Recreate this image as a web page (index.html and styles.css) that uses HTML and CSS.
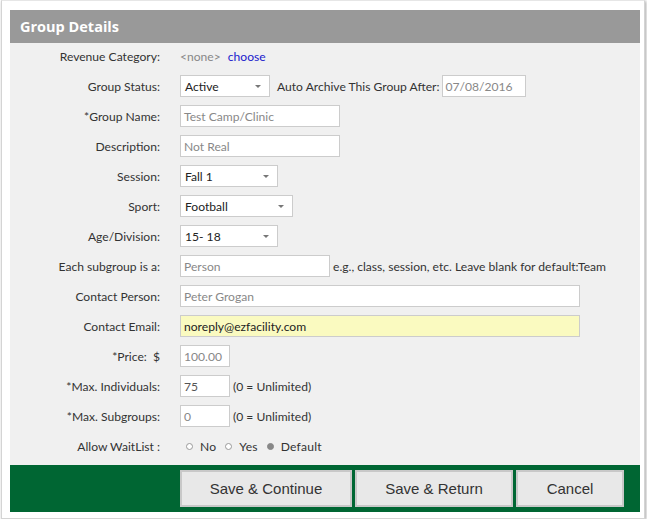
FILE: index.html
```html
<!DOCTYPE html>
<html>
<head>
<meta charset="utf-8">
<link rel="stylesheet" href="styles.css">
</head>
<body>
<div class="frame">
  <div class="panel">
    <div class="header">Group Details</div>
    <div class="form">
      <div class="row">
        <div class="label">Revenue Category:</div>
        <div class="field"><span class="none">&lt;none&gt;</span><a class="choose">choose</a></div>
      </div>
      <div class="row">
        <div class="label">Group Status:</div>
        <div class="field">
          <div class="select w90">Active<span class="caret"></span></div>
          <span class="after">Auto Archive This Group After:</span>
          <div class="input date">07/08/2016</div>
        </div>
      </div>
      <div class="row">
        <div class="label">*Group Name:</div>
        <div class="field"><div class="input w160">Test Camp/Clinic</div></div>
      </div>
      <div class="row">
        <div class="label">Description:</div>
        <div class="field"><div class="input w160">Not Real</div></div>
      </div>
      <div class="row">
        <div class="label">Session:</div>
        <div class="field"><div class="select w98">Fall 1<span class="caret"></span></div></div>
      </div>
      <div class="row">
        <div class="label">Sport:</div>
        <div class="field"><div class="select w113">Football<span class="caret"></span></div></div>
      </div>
      <div class="row">
        <div class="label">Age/Division:</div>
        <div class="field"><div class="select w98">15- 18<span class="caret"></span></div></div>
      </div>
      <div class="row">
        <div class="label">Each subgroup is a:</div>
        <div class="field"><div class="input w150">Person</div><span class="hint">e.g., class, session, etc. Leave blank for default:Team</span></div>
      </div>
      <div class="row">
        <div class="label">Contact Person:</div>
        <div class="field"><div class="input w400">Peter Grogan</div></div>
      </div>
      <div class="row">
        <div class="label">Contact Email:</div>
        <div class="field"><div class="input w400 email">noreply@ezfacility.com</div></div>
      </div>
      <div class="row">
        <div class="label">*Price:&nbsp; $</div>
        <div class="field"><div class="input w50">100.00</div></div>
      </div>
      <div class="row">
        <div class="label">*Max. Individuals:</div>
        <div class="field"><div class="input w50 dark">75</div><span class="hint">(0 = Unlimited)</span></div>
      </div>
      <div class="row">
        <div class="label">*Max. Subgroups:</div>
        <div class="field"><div class="input w50">0</div><span class="hint">(0 = Unlimited)</span></div>
      </div>
      <div class="row">
        <div class="label">Allow WaitList :</div>
        <div class="field radios">
          <span class="radio"></span><span class="rlabel">No</span>
          <span class="radio"></span><span class="rlabel">Yes</span>
          <span class="radio checked"></span><span class="rlabel">Default</span>
        </div>
      </div>
    </div>
    <div class="footer">
      <button class="btn b1">Save &amp; Continue</button>
      <button class="btn b2">Save &amp; Return</button>
      <button class="btn b3">Cancel</button>
    </div>
  </div>
</div>
</body>
</html>
```

FILE: styles.css
```css
* { box-sizing: border-box; }
html, body { margin: 0; padding: 0; background: #ffffff; }
body {
  font-family: "Lato", "Open Sans", sans-serif;
  font-size: 12.1px;
  color: #333333;
}
.frame {
  width: 644px;
  height: 519px;
  margin-left: 1px;
  border: 1px solid #d4d4d4;
  border-top-color: #e6e6e6;
  box-shadow: 1px 1px 3px rgba(0,0,0,0.35);
  padding: 9px 3px 6px 8px;
  background: #fff;
}
.panel {
  width: 630px;
  height: 502px;
  display: flex;
  flex-direction: column;
  background: #f0f0f0;
}
.header {
  height: 33px;
  background: #999999;
  color: #ffffff;
  font-family: "Open Sans", sans-serif;
  font-weight: bold;
  font-size: 14.5px;
  line-height: 33px;
  padding-left: 10px;
}
.form {
  flex: 1;
  padding-top: 0;
}
.row {
  height: 30px;
  display: flex;
  align-items: center;
}
.row:first-child { height: 28px; padding-bottom: 2px; }
.label {
  width: 150px;
  text-align: right;
  color: #333;
  white-space: nowrap;
}
.field {
  margin-left: 20px;
  display: flex;
  align-items: center;
}
.none { color: #888; }
.choose { color: #1a1acc; margin-left: 7px; }
.input, .select {
  height: 22px;
  background: #fff;
  border: 1px solid #cccccc;
  line-height: 21px;
  padding-left: 3px;
  color: #888;
  position: relative;
  white-space: nowrap;
}
.select { color: #222; padding-left: 4px; }
.caret {
  position: absolute;
  right: 8px;
  top: 9px;
  width: 0; height: 0;
  border-left: 3px solid transparent;
  border-right: 3px solid transparent;
  border-top: 3px solid #777;
}
.w90 { width: 90px; }
.w98 { width: 98px; }
.w113 { width: 113px; }
.w150 { width: 150px; }
.w160 { width: 160px; }
.w400 { width: 400px; }
.w50 { width: 50px; }
.date { width: 84px; margin-left: 2px; }
.after { margin-left: 7px; }
.hint { margin-left: 3px; }
.email { background: #fafac0; color: #222; }
.dark { color: #555; }
.radios { margin-left: 26px; }
.radio {
  width: 7px; height: 7px;
  border: 1px solid #999;
  border-radius: 50%;
  background: #fff;
}
.radio.checked { background: #888; border-color: #888; }
.rlabel { margin-left: 7px; margin-right: 9px; letter-spacing: 0.2px; }
.footer {
  height: 47px;
  background: #006633;
  display: flex;
  align-items: flex-start;
  padding-top: 5px;
  padding-left: 170px;
  gap: 3px;
}
.btn {
  height: 37px;
  background: #e8e8e8;
  border: 2px solid #c8c8c8;
  font-family: "Liberation Sans", Arial, sans-serif;
  font-size: 15px;
  color: #333;
  padding: 0;
}
.b1 { width: 172px; }
.b2 { width: 158px; }
.b3 { width: 108px; }
```
